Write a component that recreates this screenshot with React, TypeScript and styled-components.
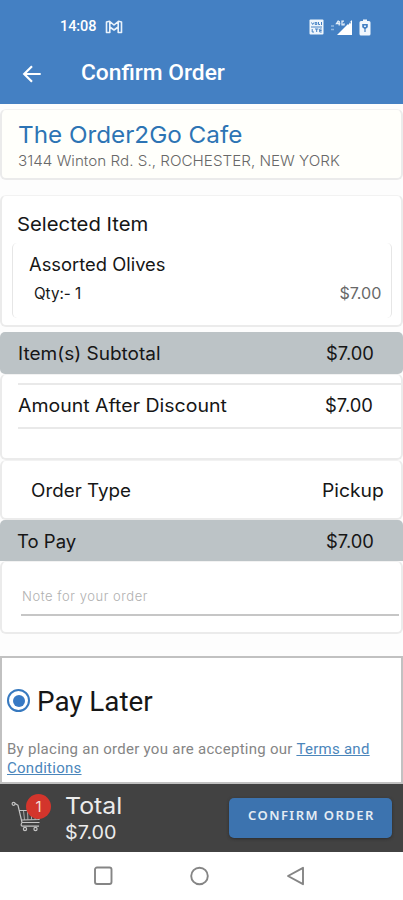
import React from "react";
import styled, { createGlobalStyle } from "styled-components";

const GlobalStyle = createGlobalStyle`
  * { box-sizing: border-box; }
  body { margin: 0; background: #fdfdfd; }
`;

const Screen = styled.div`
  width: 403px;
  height: 900px;
  display: flex;
  flex-direction: column;
  overflow: hidden;
  background: #fdfdfd;
  color: #161616;
  font-family: Inter, "Liberation Sans", sans-serif;
`;

const Header = styled.header`
  height: 104px;
  flex: none;
  background: #4480c3;
  color: #fff;
  font-family: Roboto, "Liberation Sans", sans-serif;
`;

const StatusBar = styled.div`
  height: 54px;
  padding: 0 32px 0 60px;
  display: flex;
  align-items: center;
  justify-content: space-between;
`;

const StatusGroup = styled.div<{ $gap: number }>`
  display: flex;
  align-items: center;
  gap: ${(p) => p.$gap}px;
`;

const TitleBar = styled.div`
  height: 39px;
  padding-left: 22px;
  display: flex;
  align-items: center;
  gap: 39px;
`;

const Label = styled.span<{
  $size: number;
  $stretch?: number;
  $weight?: number;
  $color?: string;
  $spacing?: number;
  $end?: boolean;
}>`
  display: block;
  white-space: pre;
  font-size: ${(p) => p.$size}px;
  line-height: 1.2;
  font-weight: ${(p) => p.$weight ?? 400};
  color: ${(p) => p.$color ?? "inherit"};
  letter-spacing: ${(p) => p.$spacing ?? 0}px;
  transform: scaleX(${(p) => p.$stretch ?? 1});
  transform-origin: ${(p) => (p.$end ? "right" : "left")} center;
`;

const Card = styled.section<{ $height: number; $top?: number; $tint?: string }>`
  flex: none;
  height: ${(p) => p.$height}px;
  margin-top: ${(p) => p.$top ?? 0}px;
  background: ${(p) => p.$tint ?? "#fff"};
  border: 2px solid #ebebeb;
  border-top: 1px solid #f2f2f2;
  border-radius: 6px;
`;

const Row = styled.div<{ $height: number; $left?: number; $right?: number }>`
  height: ${(p) => p.$height}px;
  padding: 0 ${(p) => p.$right ?? 16}px 0 ${(p) => p.$left ?? 16}px;
  display: flex;
  align-items: center;
  justify-content: space-between;
`;

const SectionHeading = styled(Row)`
  padding-top: 11px;
`;

const Band = styled(Row)<{ $radius: string; $top?: number }>`
  flex: none;
  margin-top: ${(p) => p.$top ?? 0}px;
  padding-top: 2px;
  background: #bcc3c6;
  border-radius: ${(p) => p.$radius};
`;

const ItemCard = styled.div`
  height: 75px;
  margin: 0 9px 0 10px;
  border: 1px solid #e6e6e6;
  border-width: 0 1px;
  border-radius: 5px;
  padding-top: 8px;
`;

const AmountRow = styled(Row)`
  margin: 8px 0 0 16px;
  border: 2px solid #e9e9e9;
  border-width: 2px 0;
`;

const NoteField = styled.div`
  height: 33px;
  margin: 21px 2px 0 19px;
  border-bottom: 2px solid #c6c6c6;
  padding: 6px 0 0 1px;
`;

const PayCard = styled.section`
  flex: none;
  height: 128px;
  margin-top: 22px;
  background: #fff;
  border: 2px solid #c1c1c1;
  padding: 27px 5px 0;
  font-family: Roboto, "Liberation Sans", sans-serif;
`;

const RadioRow = styled.div`
  height: 34px;
  display: flex;
  align-items: center;
  gap: 7px;
`;

const Radio = styled.span`
  width: 23px;
  height: 23px;
  margin-top: -3px;
  border: 2px solid #3779bf;
  border-radius: 50%;
  display: grid;
  place-items: center;
  &::after {
    content: "";
    width: 12px;
    height: 12px;
    border-radius: 50%;
    background: #3779c4;
  }
`;

const Terms = styled.p`
  margin: 21px 0 0;
  font-size: 15px;
  line-height: 18.5px;
  letter-spacing: 0.27px;
  color: #858585;
`;

const TermsLink = styled.a`
  color: #4b86bb;
  text-decoration: underline;
`;

const Footer = styled.footer`
  flex: none;
  height: 68px;
  padding: 0 11px;
  display: flex;
  background: #424242;
  color: #ececec;
`;

const CartBox = styled.div`
  width: 54px;
  padding-top: 17px;
  position: relative;
`;

const Badge = styled.span`
  position: absolute;
  left: 15px;
  top: 10px;
  width: 25px;
  height: 25px;
  border-radius: 50%;
  background: #d3352c;
  color: #f3dedc;
  font-size: 15px;
  line-height: 25px;
  text-align: center;
`;

const Totals = styled.div`
  flex: 1;
  padding-top: 8px;
  display: flex;
  flex-direction: column;
  gap: 2px;
`;

const ConfirmButton = styled.button`
  width: 163px;
  height: 40px;
  margin: 14px 0 0;
  padding: 0 0 5px 19px;
  border: 0;
  border-radius: 5px;
  background: #3c73af;
  color: #e4ecf4;
  font-family: "Noto Sans", sans-serif;
  text-align: left;
  box-shadow: 0 1px 3px #2c2c2c;
`;

const NavBar = styled.nav`
  flex: 1;
  padding: 0 97px 0 93px;
  display: flex;
  align-items: center;
  justify-content: space-between;
  background: #fff;
`;

const MailIcon = () => (
  <svg width="18" height="14" viewBox="0 0 18 14" fill="none" stroke="#e9f2fb" strokeWidth="1.6" strokeLinejoin="round">
    <path d="M1.5 2v10.5h3.3V7L9 10l4.2-3v5.5h3.3V2l-3-.7L9 5 4.500 1.300zM4.800 7V2M13.200 7V2" />
  </svg>
);

const LteIcon = () => (
  <svg width="15" height="16" viewBox="0 0 15 16">
    <rect x="0.5" y="0.5" width="14" height="15" rx="1" fill="#eef5fc" />
    <path
      d="M2.500 3.500l1.200 2 1.200-2M6.200 3.500h1.600v2H6.200zM9.500 3v2.500H11M12.500 3v3M2 8h11M3.200 10v3H5M6 10h3.400M7.700 10v3M12.700 10h-2v3h2M10.700 11.500h2"
      fill="none"
      stroke="#4480c3"
      strokeWidth="1"
    />
  </svg>
);

const SignalIcon = () => (
  <svg width="23" height="17" viewBox="0 0 23 17">
    <path d="M1 7h3M1 10.500h3" stroke="#8eb6e0" strokeWidth="1.300" />
    <path d="M22 1v15H7z" fill="#fff" />
    <path d="M8.500 1.500L6.500 4.500h3.800M9.200 2v4.500M14 2.200h-2v3.600h2V4.200" stroke="#e4effa" strokeWidth="1.300" fill="none" />
    <path d="M16 3.800h5M18.500 1.500v4" stroke="#4480c3" strokeWidth="1" />
  </svg>
);

const BatteryIcon = () => (
  <svg width="12" height="17" viewBox="0 0 12 17">
    <path d="M4 .5h4V2h2a1.500 1.500 0 0 1 1.500 1.500V15a1.500 1.500 0 0 1-1.500 1.500H2A1.500 1.500 0 0 1 .5 15V3.500A1.500 1.500 0 0 1 2 2h2z" fill="#f1f7fd" />
    <path d="M3.200 5h5.600v3.200L6.600 10v3H5.400v-3L3.200 8.200z" fill="#4480c3" />
    <path d="M5 6.500h2V8H5z" fill="#dceafa" />
  </svg>
);

const BackIcon = () => (
  <svg width="20" height="18" viewBox="0 0 20 18" fill="none" stroke="#fff" strokeWidth="2.2">
    <path d="M18.700 9H2.500M10 1.200L2.200 9l7.800 7.800" />
  </svg>
);

const CartIcon = () => (
  <svg width="32" height="32" viewBox="0 0 32 32" fill="none" stroke="#c4c4c4" strokeWidth="1.2" strokeLinejoin="round">
    <circle cx="2.600" cy="2.800" r="1.500" />
    <path d="M4 2.500l3 1.800L11 21.500h17.500M8.200 9.500h21L28 18.500l-17.500.5M11 21.500c-1.500 2-1 3.700.8 3.700H28" />
    <path d="M12.500 9.500l1 9.300M16.500 9.500l.4 9.200M20.500 9.500v9M24.500 9.500l-.4 9" strokeWidth="0.8" />
    <circle cx="14" cy="28" r="1.600" />
    <circle cx="24.500" cy="28" r="1.600" />
  </svg>
);

const NavIcon = ({ kind }: { kind: "recent" | "home" | "back" }) => (
  <svg width="20" height="20" viewBox="0 0 20 20" fill="none" stroke="#858585" strokeWidth="1.9" strokeLinejoin="round">
    {kind === "recent" && <rect x="2" y="1.5" width="16.500" height="16.500" rx="2" />}
    {kind === "home" && <circle cx="9.500" cy="10" r="8.300" />}
    {kind === "back" && <path d="M17 1.800v16.400L2 10z" />}
  </svg>
);

export default function App() {
  return (
    <Screen>
      <GlobalStyle />
      <Header>
        <StatusBar>
          <StatusGroup $gap={9}>
            <Label $size={14.5} $weight={500} $spacing={-0.1}>14:08</Label>
            <MailIcon />
          </StatusGroup>
          <StatusGroup $gap={6}>
            <LteIcon />
            <SignalIcon />
            <BatteryIcon />
          </StatusGroup>
        </StatusBar>
        <TitleBar>
          <BackIcon />
          <Label $size={22} $weight={500} $stretch={1.035}>Confirm Order</Label>
        </TitleBar>
      </Header>

      <Card $height={71} $top={5} $tint="#fffffb">
        <Row $height={50} $left={16}>
          <Label $size={23.5} $color="#2d74b4" $stretch={1.032}>The Order2Go Cafe</Label>
        </Row>
        <Row $height={1}>
          <Label $size={14.5} $weight={300} $color="#686868" $stretch={1.05}>3144 Winton Rd. S., ROCHESTER, NEW YORK</Label>
        </Row>
      </Card>

      <Card $height={132} $top={15}>
        <SectionHeading $height={47} $left={15}>
          <Label $size={19} $stretch={1.067}>Selected Item</Label>
        </SectionHeading>
        <ItemCard>
          <Row $height={28}>
            <Label $size={18} $stretch={1.02}>Assorted Olives</Label>
          </Row>
          <Row $height={30} $left={21} $right={10}>
            <Label $size={15.5} $stretch={0.98}>Qty:- 1</Label>
            <Label $size={15.5} $color="#686868" $stretch={1.04} $end>$7.00</Label>
          </Row>
        </ItemCard>
      </Card>

      <Band $height={42} $top={5} $left={18} $right={29} $radius="5px">
        <Label $size={18} $stretch={1.057}>Item(s) Subtotal</Label>
        <Label $size={18} $stretch={1.02} $end>$7.00</Label>
      </Band>
      <Card $height={86}>
        <AmountRow $height={46} $left={0} $right={28}>
          <Label $size={18} $stretch={1.083}>Amount After Discount</Label>
          <Label $size={18} $stretch={1.02} $end>$7.00</Label>
        </AmountRow>
      </Card>
      <Card $height={60}>
        <Row $height={60} $left={29} $right={17}>
          <Label $size={18} $stretch={1.045}>Order Type</Label>
          <Label $size={18} $stretch={1.07} $end>Pickup</Label>
        </Row>
      </Card>
      <Band $height={41} $left={17} $right={29} $radius="5px 5px 0 0">
        <Label $size={18} $stretch={1.03}>To Pay</Label>
        <Label $size={18} $stretch={1.02} $end>$7.00</Label>
      </Band>
      <Card $height={73}>
        <NoteField>
          <Label $size={13} $weight={300} $color="#b0b0b0" $spacing={0.55}>Note for your order</Label>
        </NoteField>
      </Card>

      <PayCard>
        <RadioRow>
          <Radio />
          <Label $size={27} $stretch={1.03}>Pay Later</Label>
        </RadioRow>
        <Terms>
          By placing an order you are accepting our <TermsLink>Terms and Conditions</TermsLink>
        </Terms>
      </PayCard>

      <Footer>
        <CartBox>
          <CartIcon />
          <Badge>1</Badge>
        </CartBox>
        <Totals>
          <Label $size={23.5} $stretch={1.06}>Total</Label>
          <Label $size={19} $stretch={1.04}>$7.00</Label>
        </Totals>
        <ConfirmButton>
          <Label $size={13} $weight={600} $spacing={1.45}>CONFIRM ORDER</Label>
        </ConfirmButton>
      </Footer>
      <NavBar>
        <NavIcon kind="recent" />
        <NavIcon kind="home" />
        <NavIcon kind="back" />
      </NavBar>
    </Screen>
  );
}
